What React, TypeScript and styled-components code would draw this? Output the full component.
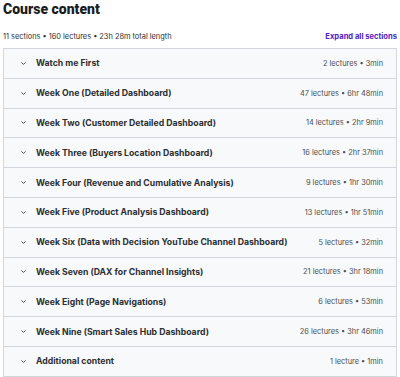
import React from 'react';
import styled, { createGlobalStyle } from 'styled-components';

const GlobalStyle = createGlobalStyle`
  html, body {
    margin: 0;
    padding: 0;
    background: #ffffff;
  }
  body {
    font-family: Inter, "Noto Sans", Arial, sans-serif;
    color: #2d2f31;
  }
`;

const sections = [
  { title: 'Watch me First', meta: '2 lectures • 3min' },
  { title: 'Week One (Detailed Dashboard)', meta: '47 lectures • 6hr 48min' },
  { title: 'Week Two (Customer Detailed Dashboard)', meta: '14 lectures • 2hr 9min' },
  { title: 'Week Three (Buyers Location Dashboard)', meta: '16 lectures • 2hr 37min' },
  { title: 'Week Four (Revenue and Cumulative Analysis)', meta: '9 lectures • 1hr 30min' },
  { title: 'Week Five (Product Analysis Dashboard)', meta: '13 lectures • 1hr 51min' },
  { title: 'Week Six (Data with Decision YouTube Channel Dashboard)', meta: '5 lectures • 32min' },
  { title: 'Week Seven (DAX for Channel Insights)', meta: '21 lectures • 3hr 18min' },
  { title: 'Week Eight (Page Navigations)', meta: '6 lectures • 53min' },
  { title: 'Week Nine (Smart Sales Hub Dashboard)', meta: '26 lectures • 3hr 46min' },
  { title: 'Additional content', meta: '1 lecture • 1min' },
];

const Page = styled.div`
  width: 400px;
  height: 377px;
  padding: 0 3px;
  box-sizing: border-box;
  overflow: hidden;
`;

const Title = styled.h2`
  margin: 0;
  padding-top: 1px;
  font-family: Roboto, Inter, Arial, sans-serif;
  font-size: 14px;
  line-height: 17px;
  font-weight: 900;
  color: #1c1d1f;
`;

const SummaryBar = styled.div`
  display: flex;
  align-items: center;
  justify-content: space-between;
  margin-top: 12px;
  height: 12px;
  margin-bottom: 6px;
`;

const Summary = styled.span`
  font-size: 7.4px;
  color: #2d2f31;
`;

const ExpandLink = styled.button`
  border: none;
  background: none;
  padding: 0;
  font-family: inherit;
  font-size: 7.6px;
  font-weight: 700;
  color: #5022c3;
  cursor: pointer;
`;

const Accordion = styled.div`
  border: 1px solid #d1d7dc;
  border-bottom: none;
`;

const Row = styled.div`
  display: flex;
  align-items: center;
  height: 28.8px;
  padding: 0 13px 0 16px;
  background: #f7f9fa;
  border-bottom: 1px solid #d1d7dc;
`;

const Chevron = styled.svg`
  width: 7px;
  height: 7px;
  flex-shrink: 0;
  margin-right: 9px;
`;

const SectionTitle = styled.span`
  flex: 1;
  font-size: 8.7px;
  font-weight: 700;
  color: #2d2f31;
  white-space: nowrap;
`;

const Meta = styled.span`
  font-size: 7.4px;
  color: #4b4f52;
  white-space: nowrap;
`;

const ChevronIcon = () => (
  <Chevron viewBox="0 0 10 10">
    <path d="M2.5 3.8 L5 6.3 L7.5 3.8" fill="none" stroke="#2d2f31" strokeWidth="1.2" strokeLinecap="round" strokeLinejoin="round" />
  </Chevron>
);

const App: React.FC = () => (
  <Page>
    <GlobalStyle />
    <Title>Course content</Title>
    <SummaryBar>
      <Summary>11 sections • 160 lectures • 23h 28m total length</Summary>
      <ExpandLink>Expand all sections</ExpandLink>
    </SummaryBar>
    <Accordion>
      {sections.map((s) => (
        <Row key={s.title}>
          <ChevronIcon />
          <SectionTitle>{s.title}</SectionTitle>
          <Meta>{s.meta}</Meta>
        </Row>
      ))}
    </Accordion>
  </Page>
);

export default App;
